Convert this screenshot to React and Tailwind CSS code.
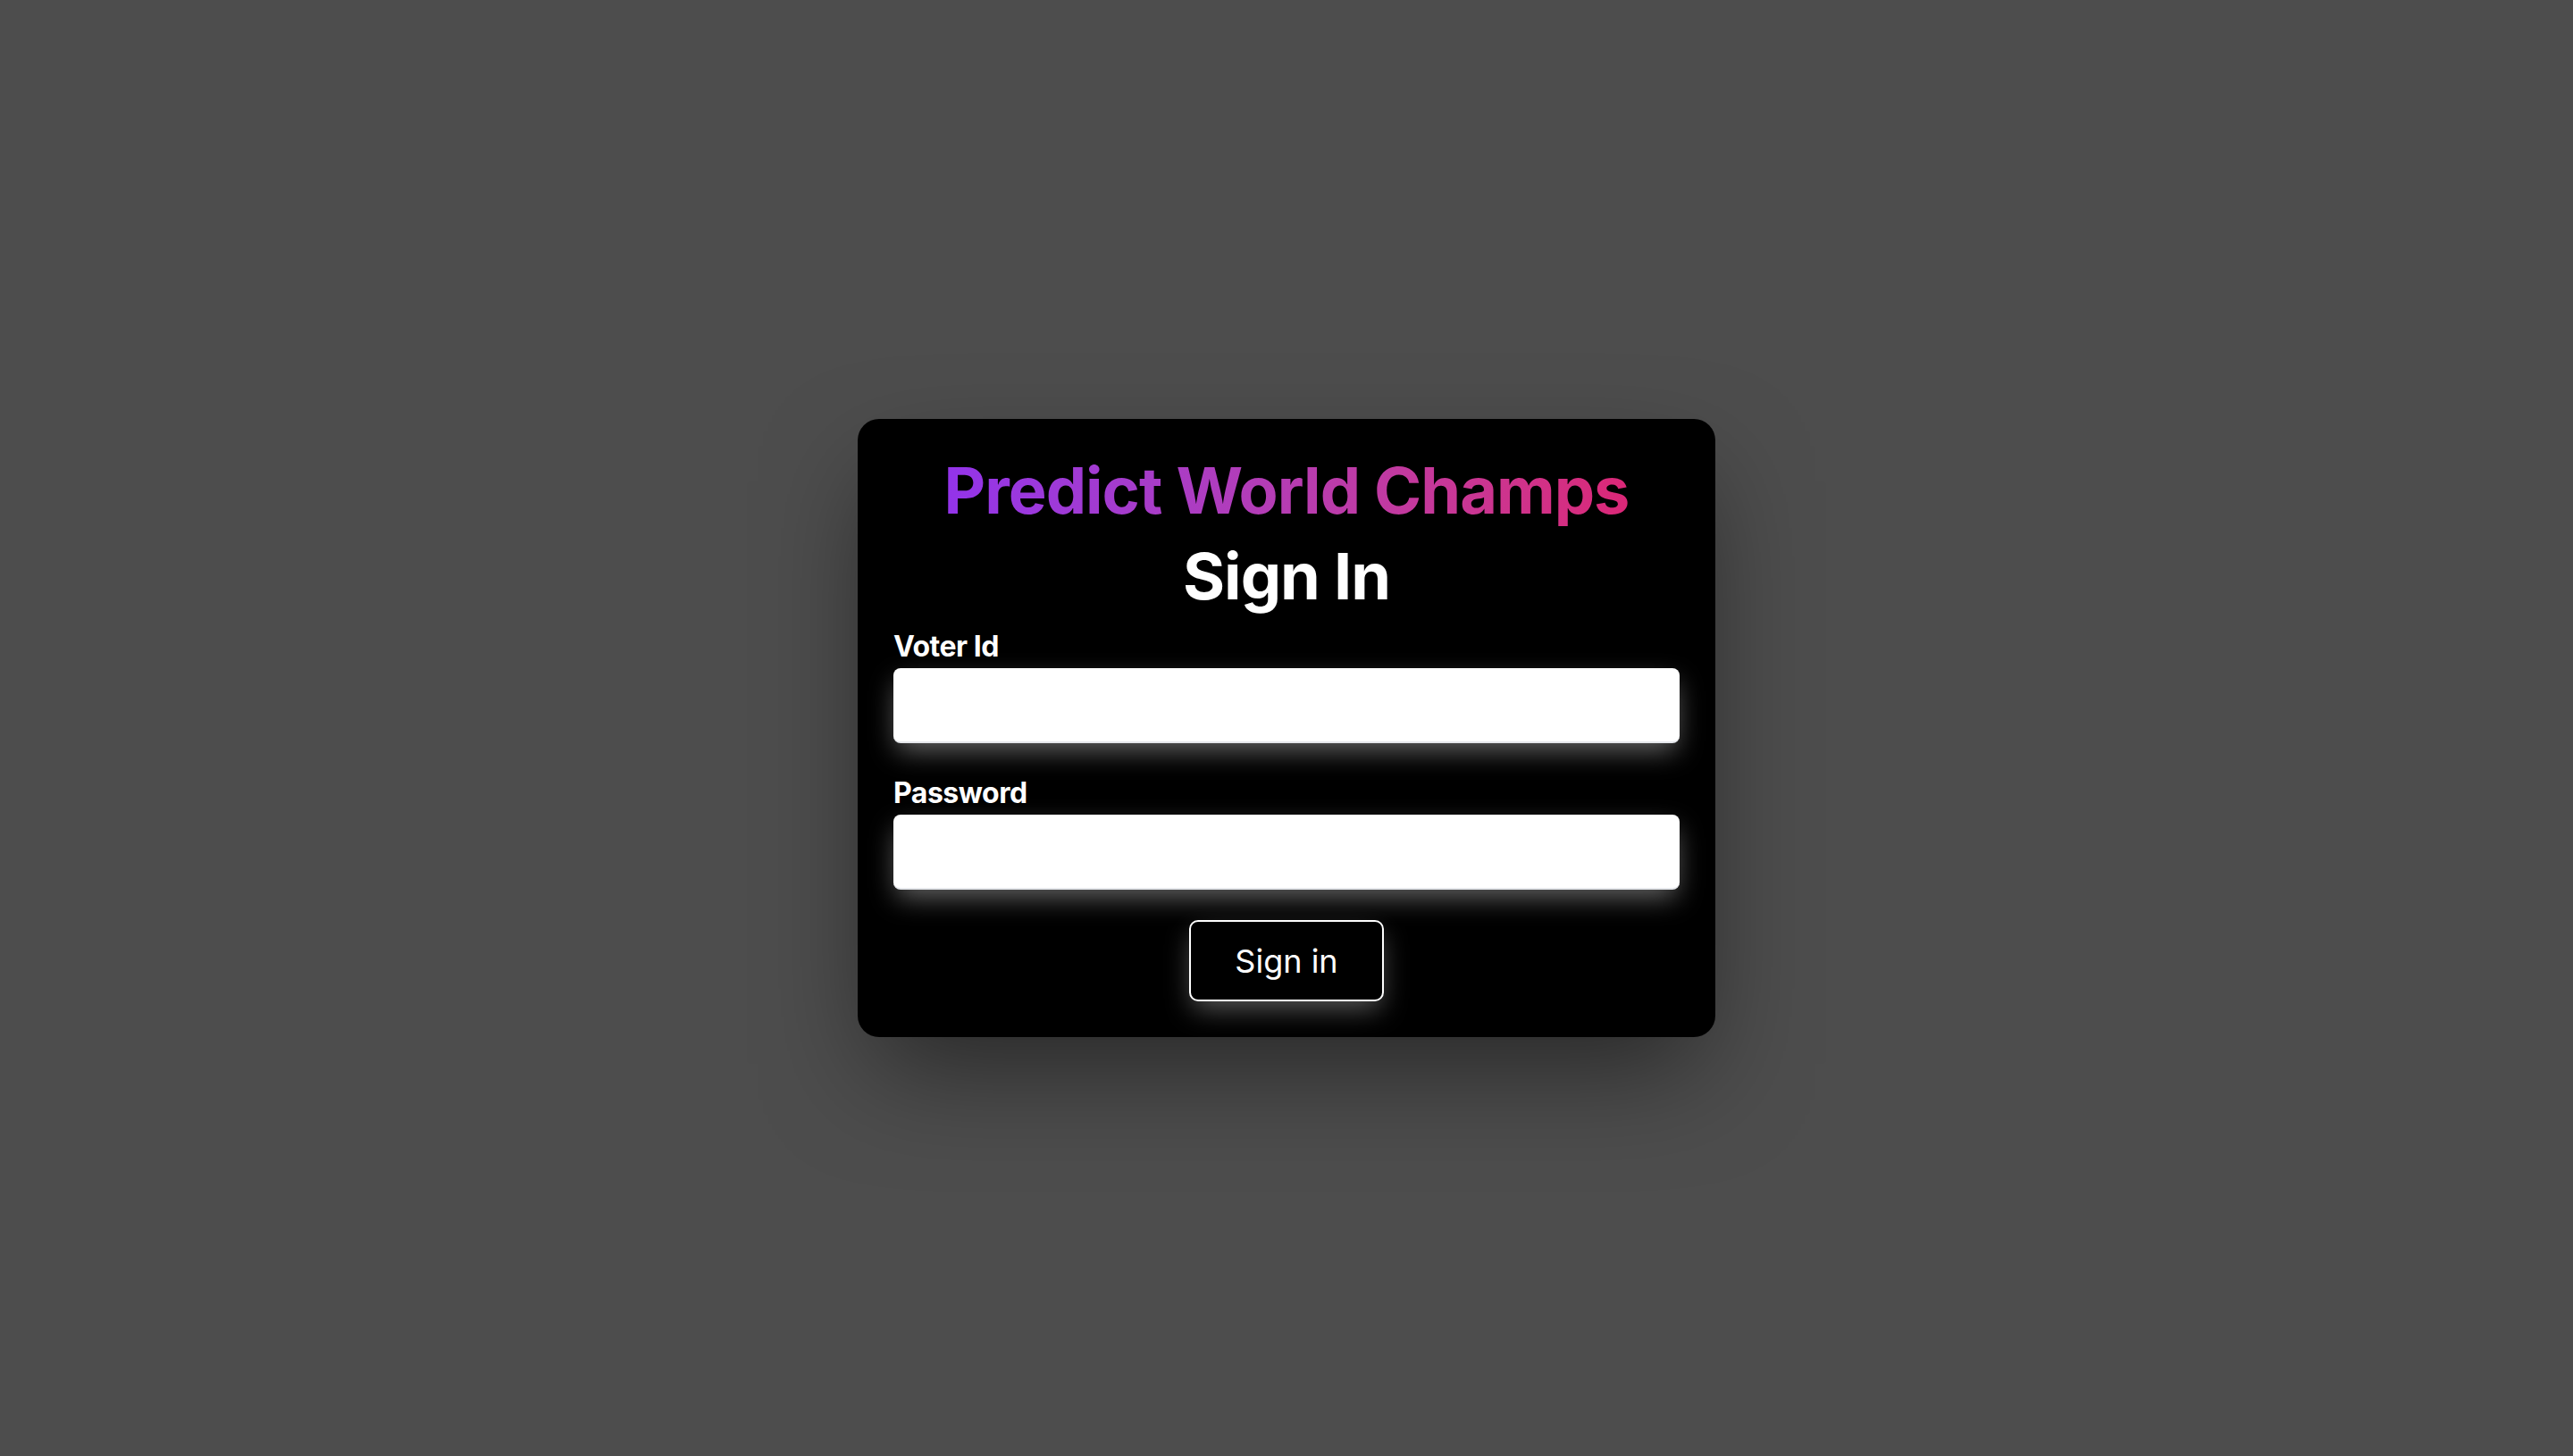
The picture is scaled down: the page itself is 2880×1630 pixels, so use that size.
export default function App() {
  return (
    <div className="flex min-h-screen items-center justify-center bg-[#4d4d4d] font-['Inter','Liberation_Sans',sans-serif]">
      <div className="flex w-[960px] flex-col rounded-3xl bg-black p-10 shadow-[0_50px_120px_-20px_rgba(0,0,0,0.5)]">
        <div className="flex flex-col items-center">
          <h1 className="bg-gradient-to-r from-[#9333ea] to-[#db2777] bg-clip-text text-[72px] font-bold leading-[80px] tracking-[-1px] text-transparent">
            Predict World Champs
          </h1>
          <h2 className="mt-4 text-[72px] font-bold leading-[80px] tracking-[-1px] text-white">Sign In</h2>
        </div>

        <form className="mt-[19px] flex flex-col" onSubmit={(e) => e.preventDefault()}>
          <label className="text-[32px] font-bold leading-[40px] tracking-[-0.5px] text-white">Voter Id</label>
          <input
            type="text"
            className="mt-[4px] h-[84px] w-full rounded-[8px] border-b-2 border-[#e5e7eb] bg-white px-5 text-[30px] shadow-[0_12px_30px_-4px_rgba(255,255,255,0.4)] outline-none"
          />

          <label className="mt-9 text-[32px] font-bold leading-[40px] tracking-[-0.5px] text-white">Password</label>
          <input
            type="password"
            className="mt-[4px] h-[84px] w-full rounded-[8px] border-b-2 border-[#e5e7eb] bg-white px-5 text-[30px] shadow-[0_12px_30px_-4px_rgba(255,255,255,0.4)] outline-none"
          />

          <div className="mt-[34px] flex justify-center">
            <button
              type="submit"
              className="h-[91px] rounded-[10px] border-2 border-white bg-black px-[49px] text-[36px] leading-[56px] text-white shadow-[0_12px_30px_-4px_rgba(255,255,255,0.35)]"
            >
              Sign in
            </button>
          </div>
        </form>
      </div>
    </div>
  );
}
